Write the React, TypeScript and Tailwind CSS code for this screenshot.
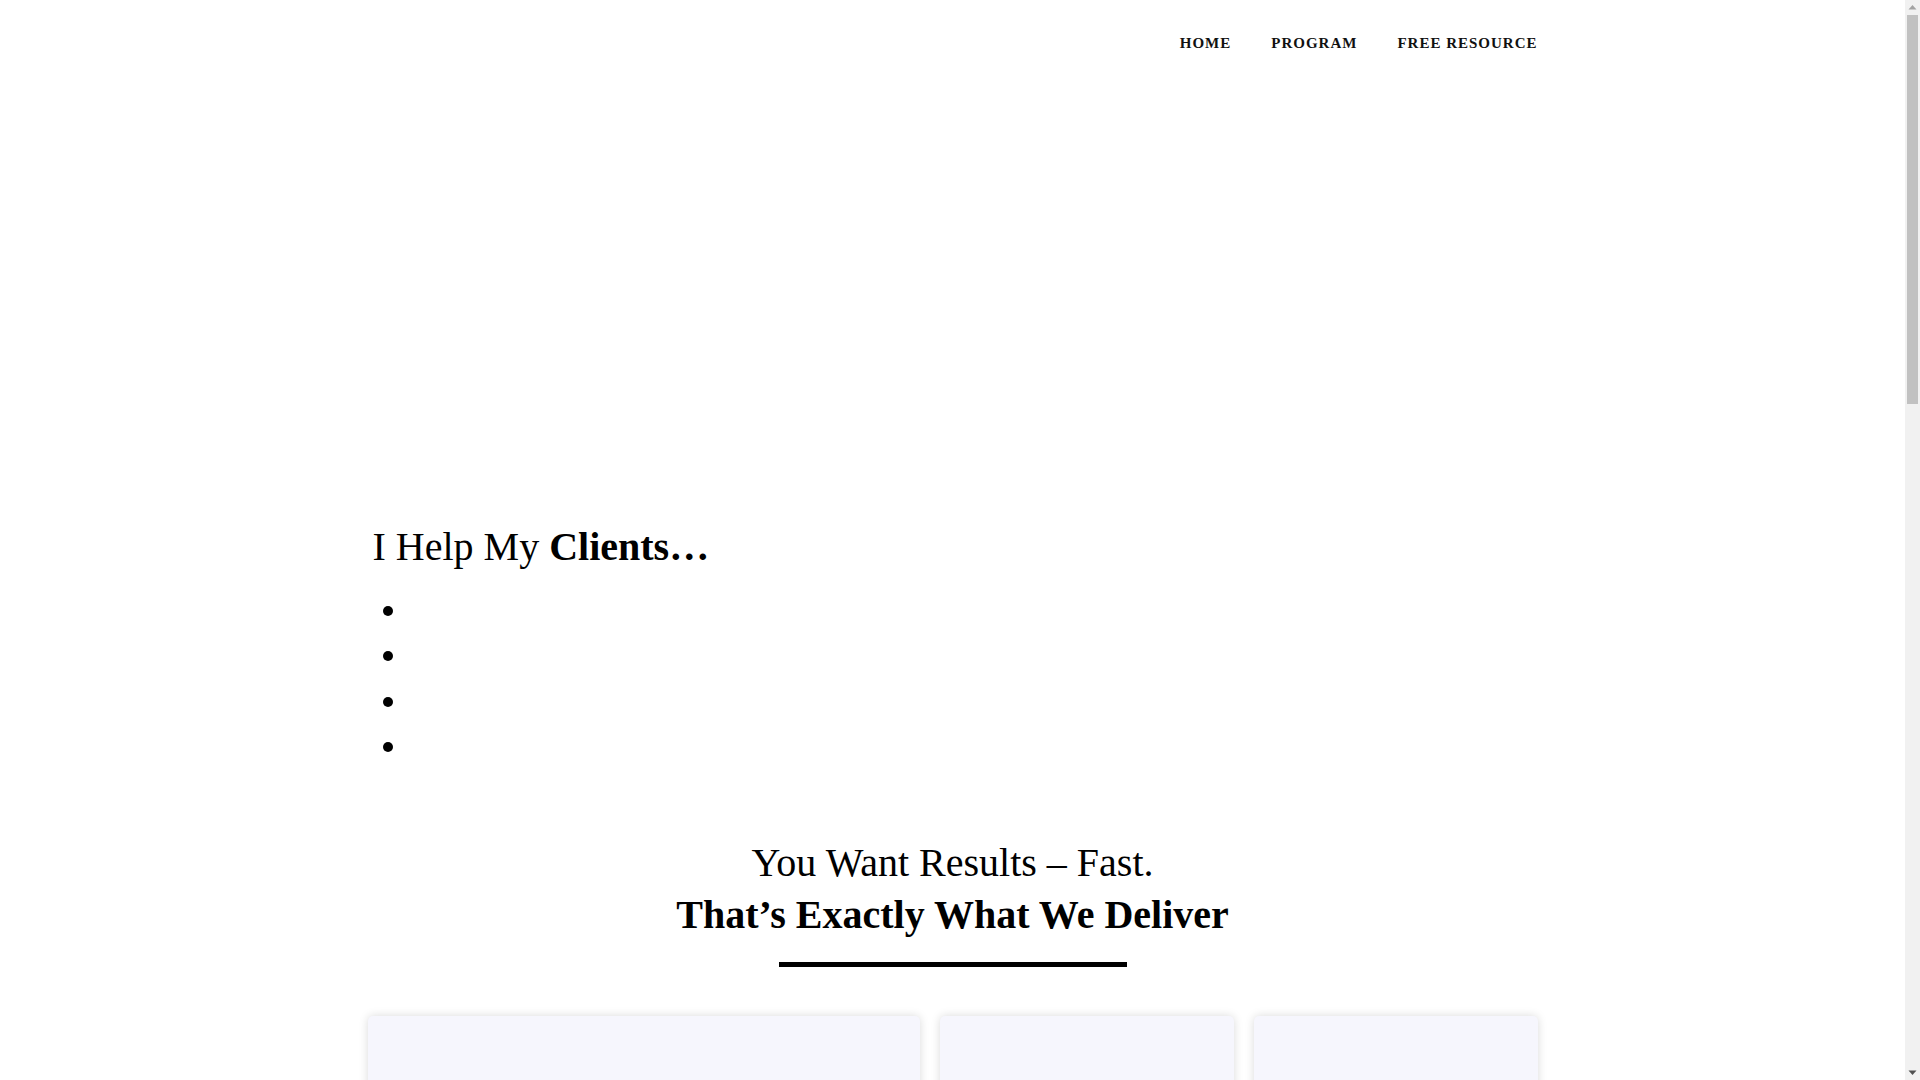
import React from "react";

const serif = "font-['Liberation_Serif','Times_New_Roman',serif]";

function NavLink({ label }: { label: string }) {
  return (
    <a href="#" className="text-[15px] font-bold uppercase tracking-[1px] text-[#111111] leading-none">
      {label}
    </a>
  );
}

function FakeScrollbar() {
  return (
    <div className="fixed top-0 right-0 w-[15px] h-screen bg-[#f1f1f1] flex flex-col items-center">
      <svg width="15" height="15" viewBox="0 0 15 15" className="shrink-0">
        <polygon points="3.5,9.5 11.5,9.5 7.5,5" fill="#a3a3a3" />
      </svg>
      <div className="w-[11px] h-[389px] bg-[#c1c1c1]" />
      <div className="flex-1" />
      <svg width="15" height="15" viewBox="0 0 15 15" className="shrink-0">
        <polygon points="3.5,5.5 11.5,5.5 7.5,10" fill="#505050" />
      </svg>
    </div>
  );
}

export default function App() {
  return (
    <div className={`${serif} bg-white text-black min-h-[2900px] w-[1905px]`}>
      <header className="w-[1170px] mx-auto h-[86px] flex items-center justify-end">
        <nav className="flex items-center gap-[40px]">
          <NavLink label="Home" />
          <NavLink label="Program" />
          <NavLink label="Free Resource" />
        </nav>
      </header>

      <main className="w-[1170px] mx-auto">
        <section className="pt-[437px]">
          <h2 className="text-[40px] leading-[48px] font-normal pl-[5px]">
            I Help My <strong className="font-bold">Clients…</strong>
          </h2>
          <ul className="mt-[17px]">
            {[0, 1, 2, 3].map((i) => (
              <li key={i} className="h-[45.5px] flex items-center">
                <span className="ml-[15px] w-[10px] h-[10px] rounded-full bg-black" />
              </li>
            ))}
          </ul>
        </section>

        <section className="mt-[67px]">
          <h2 className="text-center text-[40px] leading-[52px]">
            <span className="block font-normal">You Want Results – Fast.</span>
            <span className="block font-bold">That’s Exactly What We Deliver</span>
          </h2>
          <div className="mt-[21px] mx-auto w-[348px] h-[5px] bg-black" />

          <div className="mt-[49px] flex gap-[20px]">
            <div className="w-[553px] h-[420px] rounded-[5px] bg-[#f6f6fd] shadow-[0_0_10px_rgba(0,0,0,0.15)]" />
            <div className="w-[294px] h-[420px] rounded-[5px] bg-[#f6f6fd] shadow-[0_0_10px_rgba(0,0,0,0.15)]" />
            <div className="w-[284px] h-[420px] rounded-[5px] bg-[#f6f6fd] shadow-[0_0_10px_rgba(0,0,0,0.15)]" />
          </div>
        </section>
      </main>

      <FakeScrollbar />
    </div>
  );
}
